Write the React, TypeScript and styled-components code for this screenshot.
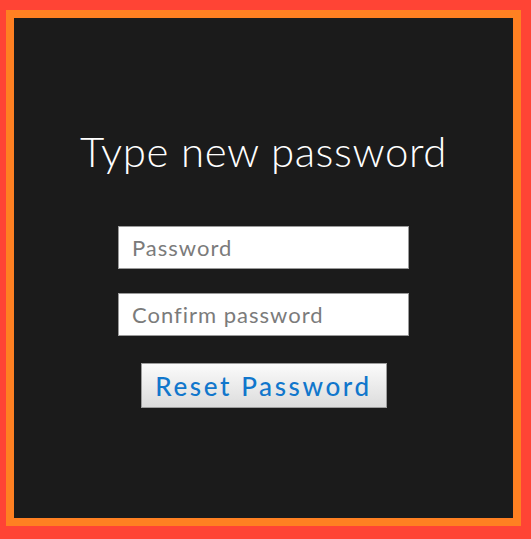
import React from "react";
import styled, { createGlobalStyle } from "styled-components";

const Global = createGlobalStyle`
  html, body {
    margin: 0;
    padding: 0;
    background: #ff4435;
  }
  #root {
    padding: 10px 10px 13px 6px;
  }
`;

const Frame = styled.div`
  box-sizing: border-box;
  height: 516px;
  border: 8px solid #ff8022;
  background: #1b1b1b;
  display: flex;
  flex-direction: column;
  align-items: center;
  padding-top: 108px;
`;

const Title = styled.h1`
  margin: 0 0 50px;
  font-family: "Lato", "Open Sans", sans-serif;
  font-weight: 300;
  font-size: 42px;
  line-height: 50px;
  color: #ffffff;
  letter-spacing: 0.6px;
`;

const Field = styled.input<{ $gap: number }>`
  box-sizing: border-box;
  width: 291px;
  height: 43px;
  margin: 0 0 ${(p) => p.$gap}px;
  padding: 0 13px;
  border: 1px solid #9a9a9a;
  background: #ffffff;
  font-family: "Lato", "Open Sans", sans-serif;
  font-size: 22px;
  letter-spacing: 1px;
  color: #333;
  outline: none;
  &::placeholder {
    color: #7b7b7b;
  }
`;

const Button = styled.button`
  box-sizing: border-box;
  width: 246px;
  height: 45px;
  border: 1px solid #9d9d9d;
  background: linear-gradient(#fbfbfb, #dcdcdc);
  font-family: "Lato", "Open Sans", sans-serif;
  font-weight: 500;
  font-size: 26px;
  letter-spacing: 2.6px;
  color: #1177cc;
  padding: 0;
  cursor: pointer;
`;

export default function App() {
  return (
    <>
      <Global />
      <Frame>
        <Title>Type new password</Title>
        <Field $gap={24} type="password" placeholder="Password" />
        <Field $gap={27} type="password" placeholder="Confirm password" />
        <Button>Reset Password</Button>
      </Frame>
    </>
  );
}
